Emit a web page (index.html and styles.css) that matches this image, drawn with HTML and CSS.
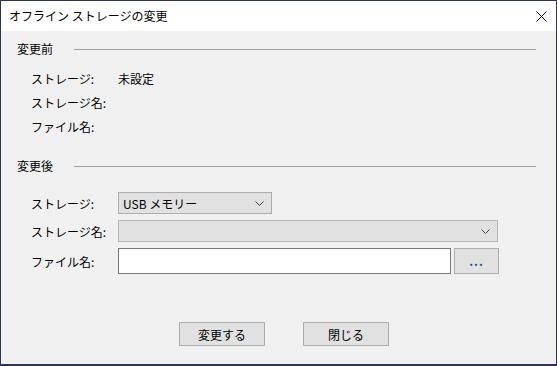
FILE: index.html
```html
<!DOCTYPE html>
<html lang="ja">
<head>
    <meta charset="UTF-8">
    <title>オフライン ストレージの変更</title>
    <link rel="stylesheet" href="styles.css">
</head>
<body>
    <div class="window">
        <div class="titlebar">
            <span class="title">オフライン ストレージの変更</span>
            <span class="close">
                <svg width="11" height="11" viewBox="0 0 11 11">
                    <path d="M0.5 0.5 L10.5 10.5 M10.5 0.5 L0.5 10.5" stroke="#000" stroke-width="1" fill="none"/>
                </svg>
            </span>
        </div>

        <div class="content">
            <div class="group-header">
                <span>変更前</span>
                <div class="rule"></div>
            </div>
            <div class="info-rows">
                <div class="row"><span class="label">ストレージ:</span><span>未設定</span></div>
                <div class="row"><span class="label">ストレージ名:</span></div>
                <div class="row last"><span class="label">ファイル名:</span></div>
            </div>

            <div class="group-header after">
                <span>変更後</span>
                <div class="rule"></div>
            </div>
            <div class="form-rows">
                <div class="form-row">
                    <span class="label">ストレージ:</span>
                    <div class="combo combo-short">
                        <span>USB メモリー</span>
                        <svg class="chevron" width="9" height="5" viewBox="0 0 9 5">
                            <path d="M0.5 0.5 L4.5 4.5 L8.5 0.5" stroke="#444" stroke-width="1" fill="none"/>
                        </svg>
                    </div>
                </div>
                <div class="form-row">
                    <span class="label">ストレージ名:</span>
                    <div class="combo combo-wide disabled">
                        <span></span>
                        <svg class="chevron" width="9" height="5" viewBox="0 0 9 5">
                            <path d="M0.5 0.5 L4.5 4.5 L8.5 0.5" stroke="#444" stroke-width="1" fill="none"/>
                        </svg>
                    </div>
                </div>
                <div class="form-row file-row">
                    <span class="label">ファイル名:</span>
                    <div class="textbox"></div>
                    <div class="btn browse">...</div>
                </div>
            </div>

            <div class="actions">
                <div class="btn action">変更する</div>
                <div class="btn action">閉じる</div>
            </div>
        </div>
    </div>
</body>
</html>
```

FILE: styles.css
```css
* {
    margin: 0;
    padding: 0;
    box-sizing: border-box;
}

body {
    font-family: "Noto Sans CJK JP", "Noto Sans", sans-serif;
    font-size: 12px;
    color: #000;
    background: #f0f0f0;
}

.window {
    width: 557px;
    height: 366px;
    border: 1px solid #2b3656;
    border-bottom-width: 2px;
    background: #f0f0f0;
    display: flex;
    flex-direction: column;
}

.titlebar {
    height: 30px;
    background: #fff;
    display: flex;
    align-items: center;
    justify-content: space-between;
    padding: 0 8px 0 8px;
}

.title {
    line-height: 16px;
}

.close {
    display: flex;
    margin-right: 1px;
    margin-top: 1px;
}

.content {
    flex: 1;
    padding: 10px 20px 0 16px;
}

.group-header {
    display: flex;
    align-items: center;
    height: 16px;
    line-height: 16px;
}

.group-header.after {
    margin-top: 19px;
}

.rule {
    flex: 1;
    height: 1px;
    background: #a0a0a0;
    margin-left: 21px;
}

.info-rows {
    margin-top: 9px;
    padding-left: 14px;
}

.row {
    display: flex;
    align-items: center;
    height: 24px;
}

.row.last {
    height: 25px;
}

.label {
    width: 87px;
    flex-shrink: 0;
}

.form-rows {
    margin-top: 18px;
    padding-left: 14px;
}

.form-row {
    display: flex;
    align-items: center;
    height: 22px;
    margin-bottom: 6px;
}

.form-row.file-row {
    height: 26px;
    margin-top: 2px;
    margin-bottom: 0;
}

.combo {
    height: 22px;
    background: #e1e1e1;
    border: 1px solid #adadad;
    display: flex;
    align-items: center;
    justify-content: space-between;
    padding: 0 7px 0 4px;
}

.combo-short {
    width: 154px;
}

.combo-wide {
    width: 380px;
}

.combo.disabled {
    border-color: #b4b4b4;
}

.chevron {
    display: block;
}

.textbox {
    width: 333px;
    height: 26px;
    background: #fff;
    border: 1px solid #7a7a7a;
}

.btn {
    background: #e1e1e1;
    border: 1px solid #adadad;
    display: flex;
    align-items: center;
    justify-content: center;
}

.browse {
    width: 45px;
    height: 26px;
    margin-left: 3px;
    color: #1a4f8a;
    font-weight: bold;
    letter-spacing: 1px;
    padding-bottom: 2px;
}

.actions {
    display: flex;
    gap: 38px;
    margin-top: 48px;
    padding-left: 162px;
}

.action {
    width: 86px;
    height: 24px;
}
```
